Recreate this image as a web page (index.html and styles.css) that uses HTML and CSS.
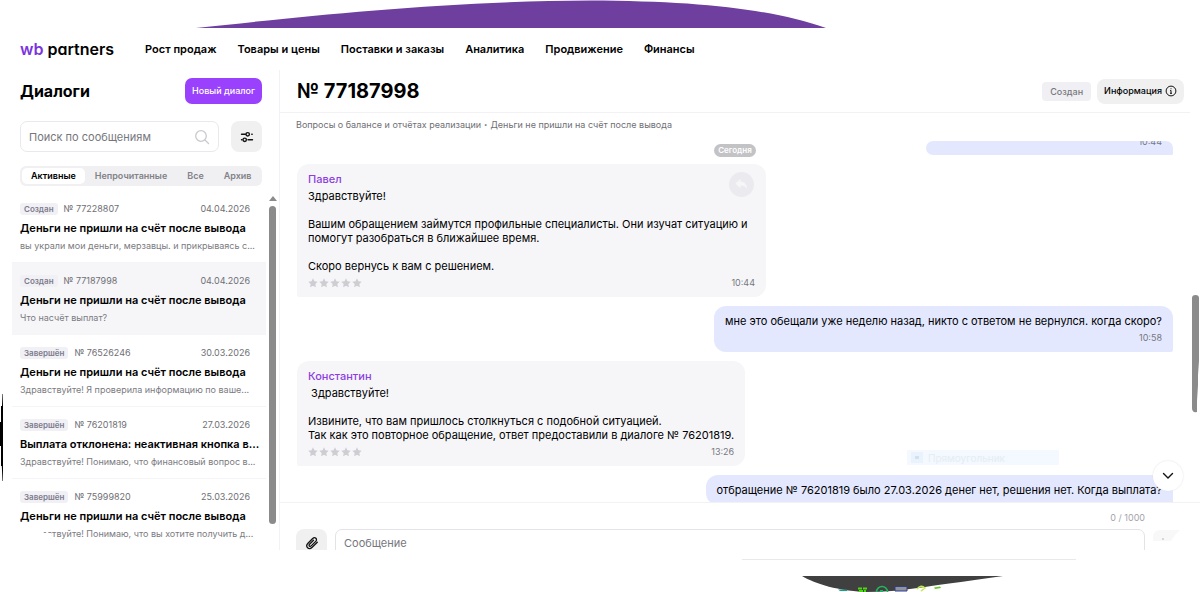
FILE: index.html
```html
<!DOCTYPE html>
<html lang="ru">
<head>
<meta charset="utf-8">
<meta name="viewport" content="width=device-width, initial-scale=1">
<title>WB Partners — Диалоги</title>
<link rel="stylesheet" href="styles.css">
</head>
<body>
<svg width="0" height="0" class="sprite" aria-hidden="true">
  <symbol id="stars" viewBox="0 0 54 10">
    <path id="star" d="M5 .3 6.4 3.3 9.7 3.7 7.3 6 7.9 9.3 5 7.700 2.100 9.300 2.700 6 .3 3.700 3.600 3.300Z"/>
    <use href="#star" x="11"/><use href="#star" x="22"/><use href="#star" x="33"/><use href="#star" x="44"/>
  </symbol>
</svg>
<div class="page">
  <div class="banner">
    <svg viewBox="0 0 1200 28" preserveAspectRatio="none" aria-hidden="true"><path fill="#6f3fa0" d="M196 28C300 17 440 1 590 .500C700 1 770 9 826 28Z"/></svg>
  </div>
  <header class="topbar">
    <a class="logo" href="#"><span class="logo-mark">wb</span> partners</a>
    <nav class="menu">
      <a href="#">Рост продаж</a><a href="#">Товары и цены</a><a href="#">Поставки и заказы</a><a href="#">Аналитика</a><a href="#">Продвижение</a><a href="#">Финансы</a>
    </nav>
  </header>
  <main class="workspace">
    <aside class="sidebar">
      <div class="side-head">
        <h2>Диалоги</h2>
        <button class="new-dialog" type="button">Новый диалог</button>
      </div>
      <div class="search-row">
        <label class="search">
          <input type="text" placeholder="Поиск по сообщениям" aria-label="Поиск по сообщениям">
          <svg width="16" height="16" viewBox="0 0 16 16" fill="none" stroke="#c9c9cf" stroke-width="1.300" stroke-linecap="round" aria-hidden="true"><circle cx="7" cy="7" r="5.300"/><path d="m11 11 3.500 3.500"/></svg>
        </label>
        <button class="filter" type="button" aria-label="Фильтры">
          <svg width="14" height="14" viewBox="0 0 14 14" fill="none" stroke="#111" stroke-width="1.400" stroke-linecap="round" aria-hidden="true"><path d="M1.500 4.300H5.500M11.800 4.300H12.200M1.500 9.800H2M8 9.800H12.500"/><circle cx="7.700" cy="4.300" r="1.700"/><circle cx="4.700" cy="9.800" r="1.700"/></svg>
        </button>
      </div>
      <div class="tabs">
        <button class="tab active" type="button">Активные</button><button class="tab" type="button">Непрочитанные</button><button class="tab" type="button">Все</button><button class="tab" type="button">Архив</button>
      </div>
      <div class="dialogs">
        <article class="dialog">
          <div class="meta"><span class="tag">Создан</span><span>№ 77228807</span><time>04.04.2026</time></div>
          <h3>Деньги не пришли на счёт после вывода</h3>
          <p>вы украли мои деньги, мерзавцы. и прикрываясь с...</p>
        </article>
        <article class="dialog selected">
          <div class="meta"><span class="tag">Создан</span><span>№ 77187998</span><time>04.04.2026</time></div>
          <h3>Деньги не пришли на счёт после вывода</h3>
          <p>Что насчёт выплат?</p>
        </article>
        <article class="dialog">
          <div class="meta"><span class="tag">Завершён</span><span>№ 76526246</span><time>30.03.2026</time></div>
          <h3>Деньги не пришли на счёт после вывода</h3>
          <p>Здравствуйте! Я проверила информацию по ваше...</p>
        </article>
        <article class="dialog">
          <div class="meta"><span class="tag">Завершён</span><span>№ 76201819</span><time>27.03.2026</time></div>
          <h3>Выплата отклонена: неактивная кнопка в...</h3>
          <p>Здравствуйте! Понимаю, что финансовый вопрос в...</p>
        </article>
        <article class="dialog">
          <div class="meta"><span class="tag">Завершён</span><span>№ 75999820</span><time>25.03.2026</time></div>
          <h3>Деньги не пришли на счёт после вывода</h3>
          <p class="torn">Здравствуйте! Понимаю, что вы хотите получить д...</p>
        </article>
        <div class="side-scroll"></div>
      </div>
      <svg class="edge" width="4" height="88" viewBox="0 0 4 88" aria-hidden="true"><path d="M2.500 0H3V87H2.500L1.800 72H1V52H0V28H1V12H2Z"/></svg>
    </aside>
    <section class="chat">
      <div class="chat-head">
        <h1>№ 77187998</h1>
        <span class="status">Создан</span>
        <button class="info" type="button">Информация
          <svg width="12" height="12" viewBox="0 0 12 12" fill="none" stroke="#111" aria-hidden="true"><circle cx="6" cy="6" r="4.900"/><path d="M6 5.400V8.400M5.200 5.500H6M5 8.300H7M6 3.300V4.200"/></svg>
        </button>
      </div>
      <div class="crumbs"><span>Вопросы о балансе и отчётах реализации</span><span class="dot">•</span><span>Деньги не пришли на счёт после вывода</span></div>
      <div class="thread">
        <div class="bubble mine cut"><time>10:44</time></div>
        <span class="day">Сегодня</span>
        <article class="bubble theirs">
          <h4>Павел</h4>
          <p>Здравствуйте!

Вашим обращением займутся профильные специалисты. Они изучат ситуацию и помогут разобраться в ближайшее время.

Скоро вернусь к вам с решением.</p>
          <div class="foot"><svg class="stars" width="54" height="10" aria-label="Оценка"><use href="#stars"/></svg><time>10:44</time></div>
          <button class="reply" type="button" aria-label="Ответить"><svg width="13" height="11" viewBox="0 0 13 11" fill="#f6f6f9" aria-hidden="true"><path d="M5.500 0V2.600C9.500 2.800 12 5.500 12.200 10C10.500 7.400 8.500 6.600 5.500 6.600V9.200L.5 4.600Z"/></svg></button>
        </article>
        <article class="bubble mine">
          <p>мне это обещали уже неделю назад, никто с ответом не вернулся. когда скоро?</p>
          <div class="foot"><time>10:58</time></div>
        </article>
        <article class="bubble theirs">
          <h4>Константин</h4>
          <p> Здравствуйте!

Извините, что вам пришлось столкнуться с подобной ситуацией.
Так как это повторное обращение, ответ предоставили в диалоге № 76201819.</p>
          <div class="foot"><svg class="stars" width="54" height="10" aria-label="Оценка"><use href="#stars"/></svg><time>13:26</time></div>
        </article>
        <article class="bubble mine">
          <p>отбращение № 76201819 было 27.03.2026 денег нет, решения нет. Когда выплата?</p>
        </article>
        <div class="ghost"><i></i>Прямоугольник</div>
        <button class="down" type="button" aria-label="Вниз"><svg width="12" height="8" viewBox="0 0 12 8" fill="none" stroke="#111" stroke-width="1.400" stroke-linecap="round" stroke-linejoin="round" aria-hidden="true"><path d="m1.500 1.500 4.500 4.500 4.500-4.500"/></svg></button>
        <svg class="chat-scroll" width="7" height="118" viewBox="0 0 7 118" aria-hidden="true"><path fill="#8b8b8b" d="M0 3Q0 0 3.500 0T7 3V66L6 80V90L5 106V117Q0 118 0 113Z"/></svg>
      </div>
      <div class="composer">
        <div class="counter">0 / 1000</div>
        <div class="compose-row">
          <button class="attach" type="button" aria-label="Прикрепить файл"><svg width="14" height="14" viewBox="0 0 14 14" fill="none" stroke="#111" stroke-width="1.300" stroke-linecap="round" stroke-linejoin="round" aria-hidden="true"><path d="M12.300 6.200 7.200 11.300C3.700 14.500-.2 10.500 3 7.200L7.700 2.500C10 .3 12.900 3.200 10.700 5.400L6.200 9.900C4.900 11.200 3.200 9.600 4.500 8.300L8.500 4.300"/></svg></button>
          <input class="message" type="text" placeholder="Сообщение" aria-label="Сообщение">
          <button class="send" type="button" aria-label="Отправить"><svg width="30" height="12" viewBox="0 0 30 12" aria-hidden="true"><path fill="#f8f8f9" d="M0 12V8Q0 1 8 1H27Q22 5 18 12Z"/><circle cx="10" cy="10" r="1" fill="#ccccd0"/></svg></button>
        </div>
      </div>
    </section>
  </main>
  <footer class="bottom">
    <svg viewBox="0 0 1200 42" preserveAspectRatio="none" aria-hidden="true">
      <path stroke="#e9e9e9" d="M742 9.500H1076"/>
      <path fill="#404040" d="M802 26H1003C975 30 945 34 925 37C905 40 885 42 865 42C840 41 815 34 802 26Z"/>
      <path fill="#1f9c84" d="M838 39.500H847V41H840Z"/>
      <path stroke="#49dc10" stroke-width="2" stroke-dasharray="4 1" d="M858 38.500H867M859 41H866"/>
      <circle cx="882" cy="42" r="5.500" fill="none" stroke="#25b463" stroke-width="1.500"/><path fill="#25b463" d="M880 40H883V42H880Z"/>
      <path fill="#8e939d" stroke="#343e83" d="M895 36.500H907V41H895Z"/>
      <path fill="none" stroke="#c0e84c" stroke-width="1.500" d="M917 39Q921 34 925 38L921 41"/>
      <path fill="#65c91c" d="M934 37.500 940 36.500 941 38 935 39Z"/>
    </svg>
  </footer>
</div>
</body>
</html>
```
FILE: styles.css
```css
* { box-sizing: border-box; }
body { margin: 0; background: #fff; color: #000; font-family: Inter, "Noto Sans", sans-serif; font-size: 11px; line-height: 14px; }
h1, h2, h3, h4, p { margin: 0; }
a { color: inherit; text-decoration: none; }
button, input { font: inherit; color: inherit; border: 0; margin: 0; padding: 0; }
input { background: transparent; outline: 0; min-width: 0; }
svg { display: block; flex: none; }
.sprite { position: absolute; }
.page { height: 100vh; display: grid; grid-template-rows: 28px 42px minmax(0, 1fr) 42px; }
.banner svg, .bottom svg { width: 100%; height: 100%; }

.topbar { display: flex; align-items: center; gap: 31px; padding: 0 20px; }
.logo { font-size: 16px; line-height: 20px; font-weight: 600; font-feature-settings: "cv11"; white-space: nowrap; }
.logo-mark { color: #7b34e0; }
.menu { display: flex; gap: 21px; font-weight: 600; white-space: nowrap; }

.workspace { display: grid; grid-template-columns: 280px minmax(0, 1fr); min-height: 0; }
.sidebar { position: relative; display: flex; flex-direction: column; min-height: 0; border-right: 1px solid #f2f2f4; }
.side-head { display: flex; align-items: center; justify-content: space-between; padding: 8px 17px 0 20px; }
.side-head h2 { font-size: 16px; line-height: 24px; font-weight: 700; }
.new-dialog { height: 26px; padding: 0 7px; border-radius: 7px; background: #9a41fe; color: #fff; font-size: 9px; font-weight: 500; }
.search-row { display: flex; gap: 12px; padding: 17px 17px 0 20px; }
.search { flex: 1; min-width: 0; height: 31px; display: flex; align-items: center; padding: 0 8px; border: 1px solid #e9e9ed; border-radius: 7px; }
.search input { flex: 1; }
input::placeholder { color: #76767c; opacity: 1; }
.filter { width: 31px; height: 31px; display: grid; place-items: center; border-radius: 8px; background: #f0f0f1; }
.tabs { display: flex; height: 20px; margin: 14px 17px 0 20px; padding: 2px; border-radius: 6px; background: #f0f0f3; }
.tab { background: none; color: #828288; font-size: 9px; font-weight: 600; border-radius: 5px; padding: 0 10px; }
.tab.active { padding: 0 9px; background: #fff; color: #000; }

.dialogs { position: relative; flex: 1; min-height: 0; margin: 5px 0 0 12px; overflow: hidden; }
.dialog { height: 72px; margin-right: 13px; padding: 12px 16px 0 8px; border-bottom: 1px solid #f5f5f7; white-space: nowrap; }
.dialog.selected { background: #f6f6f9; }
.meta { display: flex; align-items: center; gap: 6px; height: 12px; color: #6f6f75; font-size: 9px; }
.meta time { margin-left: auto; }
.tag { padding: 0 4px; border-radius: 3px; background: #f0f0f5; color: #7d7b8c; font-size: 8px; line-height: 12px; font-weight: 600; }
.dialog h3 { margin-top: 6px; font-size: 11px; line-height: 14px; font-weight: 600; }
.dialog p { margin-top: 5px; color: #7b7b81; font-size: 9px; line-height: 12px; }
.torn { position: relative; }
.torn::before { content: ""; position: absolute; inset: 0 auto 0 0; width: 34px; background: #fff; clip-path: polygon(0 0, 22px 0, 24px 5px, 31px 5px, 33px 12px, 0 12px); }
.side-scroll { position: absolute; top: 15px; right: 3px; width: 7px; height: 318px; border-radius: 4px; background: #8b8b8b; }
.side-scroll::before { content: ""; position: absolute; top: -10px; left: 0; border: 4px solid transparent; border-top: 0; border-bottom: 5px solid #8b8b8b; }
.edge { position: absolute; left: 0; top: 324px; }

.chat { display: flex; flex-direction: column; min-width: 0; min-height: 0; }
.chat-head { display: flex; align-items: center; gap: 6px; height: 43px; margin-right: 10px; padding: 0 6px 0 17px; border-bottom: 1px solid #f2f2f4; }
.chat-head h1 { flex: 1; font-size: 20px; line-height: 24px; font-weight: 700; }
.status { padding: 0 8px; border-radius: 4px; background: #f0f0f4; color: #77777d; font-size: 9px; line-height: 19px; font-weight: 500; }
.info { display: flex; align-items: center; gap: 3px; height: 25px; padding: 0 7px; border-radius: 8px; background: #f0f0f1; font-size: 9px; font-weight: 500; }
.crumbs { display: flex; gap: 3px; height: 28px; padding: 5px 17px 0 16px; color: #6f6f75; font-size: 9px; white-space: nowrap; }
.dot { font-size: 6px; }
.thread { position: relative; flex: 1; min-height: 0; overflow: hidden; display: flex; flex-direction: column; gap: 9px; padding: 0 27px 0 17px; }
.bubble { position: relative; flex: none; max-width: 469px; padding: 8px 11px; border-radius: 12px; }
.bubble p { white-space: pre-wrap; }
.theirs { align-self: flex-start; background: #f6f6f9; border-bottom-left-radius: 2px; }
.mine { align-self: flex-end; background: #e3e8ff; border-bottom-right-radius: 2px; }
.bubble h4 { margin-bottom: 3px; font-size: 11px; line-height: 14px; font-weight: 500; color: #8c3ee0; }
.foot { display: flex; align-items: center; justify-content: space-between; height: 12px; margin-top: 4px; color: #77777d; font-size: 9px; }
.mine .foot { justify-content: flex-end; }
.stars { fill: #cdcdd2; }
.cut { width: 247px; height: 14px; overflow: hidden; display: flex; align-items: flex-end; justify-content: flex-end; padding: 0 11px 6px; color: #77778a; font-size: 9px; }
.day { position: absolute; top: 3px; left: 17px; right: 27px; width: fit-content; margin: 0 auto; padding: 0 4px; border-radius: 7px; background: #c3c3c6; color: #fff; font-size: 8px; line-height: 13px; font-weight: 600; }
.reply { position: absolute; top: 8px; right: 12px; width: 25px; height: 25px; border-radius: 50%; background: #ebebef; display: grid; place-items: center; }
.ghost { position: absolute; right: 141px; bottom: 37px; display: flex; align-items: center; gap: 5px; width: 152px; height: 15px; padding-left: 4px; background: #f3f9fe; color: #e6edf3; font-size: 10px; }
.ghost i { width: 12px; height: 11px; border: 4px solid #eaf3fb; background: #cfe2f3; }
.down { position: absolute; right: 17px; bottom: 11px; width: 30px; height: 30px; border-radius: 50%; background: #fff; box-shadow: 0 0 2px #dedee4; display: grid; place-items: center; }
.chat-scroll { position: absolute; right: 1px; top: 154px; }
.composer { height: 48px; border-top: 1px solid #f2f2f4; overflow: hidden; }
.counter { height: 26px; padding: 8px 55px 0 0; text-align: right; color: #a4a4aa; font-size: 9px; }
.compose-row { display: flex; align-items: flex-start; gap: 8px; height: 21px; padding: 0 17px 0 16px; overflow: hidden; }
.attach { width: 31px; height: 28px; display: grid; place-items: center; border-radius: 8px; background: #f0f0f1; }
.message { flex: 1; height: 28px; padding: 0 8px; border: 1px solid #e3e3e7; border-radius: 7px; }
.send { width: 30px; height: 12px; background: none; }
```
